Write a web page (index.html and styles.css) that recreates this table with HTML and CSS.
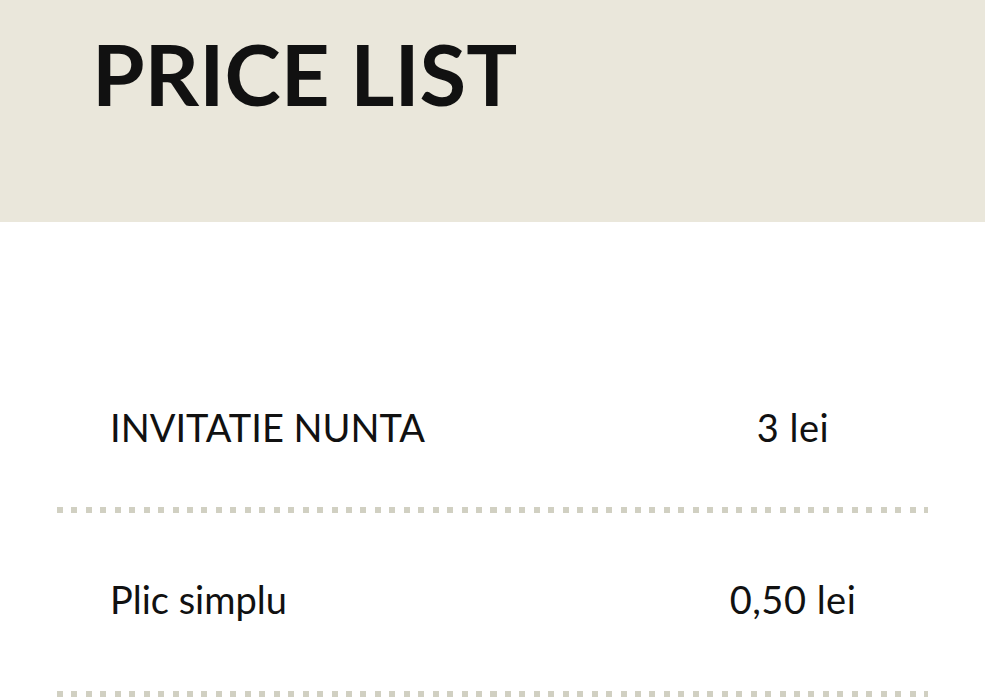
FILE: index.html
```html
<!DOCTYPE html>
<html lang="ro">
<head>
  <meta charset="UTF-8">
  <meta name="viewport" content="width=device-width, initial-scale=1.0">
  <title>Price List</title>
  <link rel="stylesheet" href="styles.css">
</head>
<body>
  <header class="header">
    <h1>PRICE LIST</h1>
  </header>

  <main class="list">
    <div class="row first">
      <span class="item">INVITATIE NUNTA</span>
      <span class="price">3 lei</span>
    </div>
    <div class="dots"></div>

    <div class="row">
      <span class="item">Plic simplu</span>
      <span class="price">0,50 lei</span>
    </div>
    <div class="dots"></div>
  </main>
</body>
</html>
```

FILE: styles.css
```css
:root {
  --color-band: #eae7db;
  --color-text: #111111;
  --color-dots: #d1d0c2;
}

* {
  margin: 0;
  padding: 0;
  box-sizing: border-box;
}

body {
  background: white;
  font-family: 'Lato', 'Liberation Sans', sans-serif;
  color: var(--color-text);
  overflow: hidden;
}

.header {
  background: var(--color-band);
  height: 222px;
  padding: 31px 0 0 92px;
}

h1 {
  font-size: 85px;
  font-weight: 700;
  line-height: 1;
}

.list {
  margin: 0 57px;
}

.row {
  display: grid;
  grid-template-columns: 1fr 200px;
  align-items: center;
  padding: 0 35px 6px 53px;
  font-size: 38px;
  line-height: 1;
  height: 178px;
}

.row.first {
  height: 285px;
  padding-top: 124px;
  padding-bottom: 0;
}

.price {
  text-align: center;
  letter-spacing: 0.5px;
}

.dots {
  height: 6px;
  background: repeating-linear-gradient(90deg, var(--color-dots) 0 6px, transparent 6px 14.45px);
}
```
